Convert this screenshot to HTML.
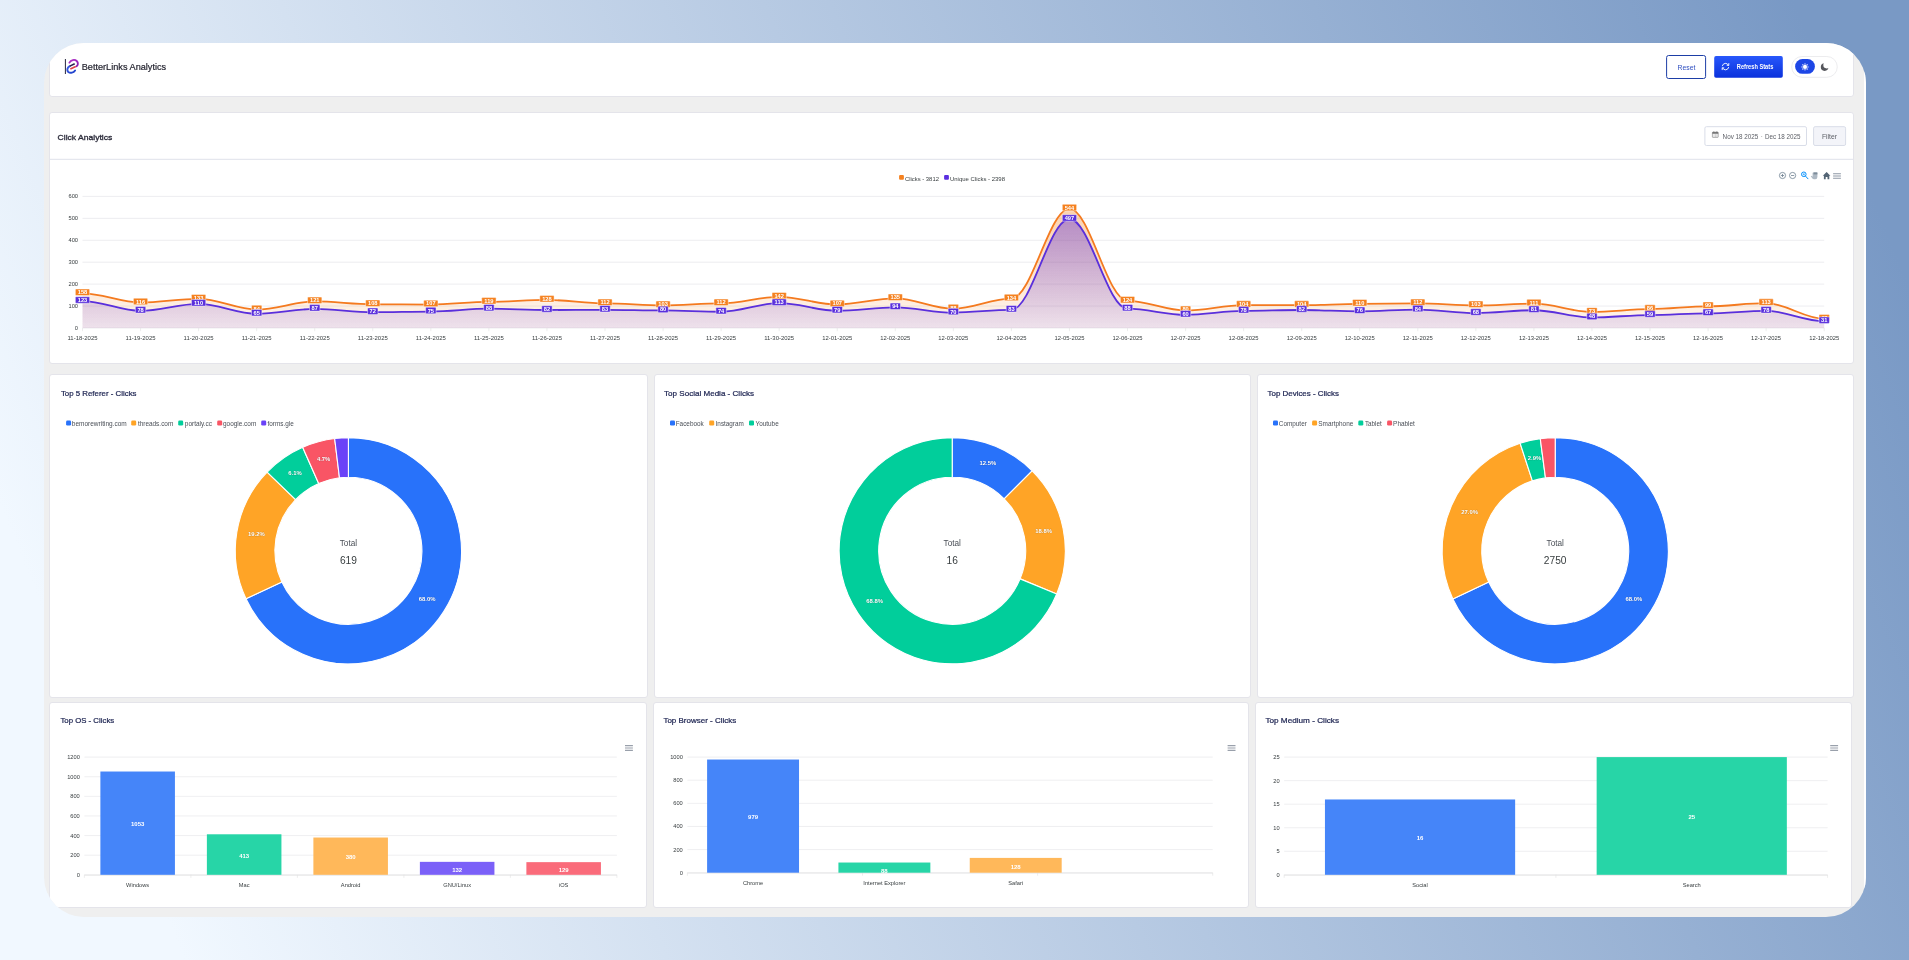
<!DOCTYPE html>
<html><head><meta charset="utf-8"><title>BetterLinks Analytics</title>
<style>
html,body{margin:0;padding:0}
body{width:1909px;height:960px;overflow:hidden;position:relative;font-family:"Liberation Sans", sans-serif;background:#b5c8e2;}
#bg{position:absolute;left:0;top:0;width:1909px;height:960px;background:linear-gradient(68deg,#f1f8ff 0%,#f1f8ff 8%,#7999c5 95%,#7999c5 100%);}
#frame{position:absolute;left:44px;top:43px;width:1822px;height:874px;border-radius:40px;overflow:hidden;background:#efefef;}
#in{position:absolute;left:-44px;top:-43px;width:1909px;height:960px;}
.card{position:absolute;background:#fff;border:1px solid #e4e4ea;border-radius:3px;box-sizing:border-box;}
svg{position:absolute;left:0;top:0;}
svg text{font-family:"Liberation Sans", sans-serif;}
#edge{position:absolute;left:1864px;top:0;width:2px;height:960px;background:#fff;}
</style></head><body>
<div id="bg"></div>
<div id="frame"><div id="in">
<div class="card" style="left:49px;top:42px;width:1805.0px;height:55.0px"></div>
<div class="card" style="left:49px;top:112px;width:1805.0px;height:252.0px"></div>
<div class="card" style="left:49px;top:374px;width:599.0px;height:324.0px"></div>
<div class="card" style="left:654px;top:374px;width:597.0px;height:324.0px"></div>
<div class="card" style="left:1257px;top:374px;width:597.0px;height:324.0px"></div>
<div class="card" style="left:49px;top:702px;width:598.0px;height:206.0px"></div>
<div class="card" style="left:653px;top:702px;width:596.0px;height:206.0px"></div>
<div class="card" style="left:1255px;top:702px;width:597.0px;height:206.0px"></div>
<div id="edge"></div>
<svg width="1909" height="960" viewBox="0 0 1909 960"><g opacity="0.999">
<line x1="65.4" y1="59" x2="65.4" y2="74" stroke="#25253d" stroke-width="1"/>
<defs><linearGradient id="lgp" x1="0" y1="0" x2="1" y2="1"><stop offset="0" stop-color="#b030c8"/><stop offset="1" stop-color="#8a1fb0"/></linearGradient><linearGradient id="lgb" x1="0" y1="0" x2="1" y2="1"><stop offset="0" stop-color="#3a5be8"/><stop offset="1" stop-color="#1c3fc8"/></linearGradient></defs>
<path d="M69.4 62.6 C70.9 59.9 74.6 59.0 76.7 61.0 C78.6 63.0 78.0 65.2 76.5 66.3" fill="none" stroke="url(#lgp)" stroke-width="1.85" stroke-linecap="round"/>
<path d="M69.7 66.2 C67.1 67.6 66.6 70.4 68.3 72.0 C70.3 73.6 73.5 72.7 75.1 70.5" fill="none" stroke="url(#lgb)" stroke-width="1.95" stroke-linecap="round"/>
<line x1="70.3" y1="65.9" x2="74.2" y2="64" stroke="#2a2150" stroke-width="1.6" stroke-linecap="round"/>
<line x1="70.9" y1="68.7" x2="75.2" y2="66.8" stroke="#e2404a" stroke-width="1.7" stroke-linecap="round"/>
<text x="81.70" y="69.80" font-size="9.3" text-anchor="start" font-weight="normal" fill="#1f1f2b" textLength="84.50" lengthAdjust="spacingAndGlyphs" stroke="#1f1f2b" stroke-width="0.2">BetterLinks Analytics</text>
<rect x="1666.6" y="55.5" width="39" height="23" rx="2" fill="#fff" stroke="#1d3ea6" stroke-width="1"/>
<text x="1677.60" y="69.80" font-size="7.4" text-anchor="start" font-weight="normal" fill="#2f4fc0" textLength="17.90" lengthAdjust="spacingAndGlyphs">Reset</text>
<defs><linearGradient id="gbtn" x1="0" y1="0" x2="0" y2="1"><stop offset="0" stop-color="#2857fb"/><stop offset="1" stop-color="#0a31dc"/></linearGradient></defs>
<rect x="1714.2" y="56.1" width="68.6" height="21.6" rx="1.8" fill="url(#gbtn)"/>
<g fill="none" stroke="#fff" stroke-width="0.9" stroke-linecap="round" stroke-linejoin="round"><path d="M1722.36 65.76 A3.25 3.25 0 0 1 1728.45 65.23"/><path d="M1728.64 67.44 A3.25 3.25 0 0 1 1722.55 67.97"/><path d="M1728.80 63.53 L1728.80 65.33 L1727.15 65.33"/><path d="M1722.20 69.67 L1722.20 67.87 L1723.85 67.87"/></g>
<text x="1736.80" y="68.90" font-size="6.6" text-anchor="start" font-weight="bold" fill="#fff" textLength="36.50" lengthAdjust="spacingAndGlyphs">Refresh Stats</text>
<rect x="1791.7" y="56.5" width="45.6" height="20.8" rx="10.4" fill="#fff" stroke="#ececee" stroke-width="1"/>
<rect x="1795.1" y="59" width="19.8" height="14.8" rx="7.4" fill="#1d46e6"/>
<circle cx="1805.0" cy="66.9" r="2.05" fill="#fff"/>
<path d="M1807.44 66.15 L1809.15 66.90 L1807.44 67.65 Z M1807.26 68.09 L1807.93 69.83 L1806.19 69.16 Z M1805.75 69.34 L1805.00 71.05 L1804.25 69.34 Z M1803.81 69.16 L1802.07 69.83 L1802.74 68.09 Z M1802.56 67.65 L1800.85 66.90 L1802.56 66.15 Z M1802.74 65.71 L1802.07 63.97 L1803.81 64.64 Z M1804.25 64.46 L1805.00 62.75 L1805.75 64.46 Z M1806.19 64.64 L1807.93 63.97 L1807.26 65.71 Z " fill="#fff"/>
<mask id="mm"><rect x="1815" y="60" width="20" height="14" fill="#fff"/><circle cx="1826.60" cy="65.10" r="3.3" fill="#000"/></mask>
<circle cx="1824.60" cy="67.10" r="3.8" fill="#55565c" mask="url(#mm)"/>
<text x="57.60" y="140.00" font-size="8.1" text-anchor="start" font-weight="normal" fill="#2b2b3a" textLength="54.70" lengthAdjust="spacingAndGlyphs" stroke="#2b2b3a" stroke-width="0.32">Click Analytics</text>
<line x1="50" y1="159.3" x2="1853" y2="159.3" stroke="#dfe2ea" stroke-width="1"/>
<rect x="1704.9" y="126.7" width="101.6" height="18.8" rx="1.5" fill="#fff" stroke="#d9dde8" stroke-width="1"/>
<g><rect x="1712.4" y="132.2" width="5.8" height="5.2" rx="0.5" fill="#fff" stroke="#777" stroke-width="0.6"/><rect x="1712.4" y="132.2" width="5.8" height="1.5" fill="#666"/><path d="M1713.8 131.3v1.4M1716.8 131.3v1.4" stroke="#666" stroke-width="0.6"/><path d="M1713.6 134.9h0.9M1715 134.9h0.9M1716.4 134.9h0.9M1713.6 136.2h0.9M1715 136.2h0.9M1716.4 136.2h0.9" stroke="#888" stroke-width="0.6"/></g>
<text x="1722.60" y="138.60" font-size="6.3" text-anchor="start" font-weight="normal" fill="#5c5f66" textLength="35.70" lengthAdjust="spacingAndGlyphs">Nov 18 2025</text>
<text x="1761.70" y="138.60" font-size="6.3" text-anchor="middle" font-weight="normal" fill="#999">·</text>
<text x="1764.90" y="138.60" font-size="6.3" text-anchor="start" font-weight="normal" fill="#5c5f66" textLength="35.50" lengthAdjust="spacingAndGlyphs">Dec 18 2025</text>
<rect x="1813.6" y="126.7" width="32" height="18.8" rx="1.5" fill="#f3f4f9" stroke="#d9dde8" stroke-width="1"/>
<text x="1829.40" y="138.60" font-size="6.6" text-anchor="middle" font-weight="normal" fill="#5c5f66" textLength="15.00" lengthAdjust="spacingAndGlyphs">Filter</text>
<rect x="899.1" y="175.0" width="4.8" height="4.8" rx="1" fill="#f5811f"/>
<text x="905.00" y="180.70" font-size="5.9" text-anchor="start" font-weight="normal" fill="#373d3f" textLength="33.90" lengthAdjust="spacingAndGlyphs">Clicks - 3812</text>
<rect x="944.1" y="175.0" width="4.8" height="4.8" rx="1" fill="#5b2fe0"/>
<text x="950.00" y="180.70" font-size="5.9" text-anchor="start" font-weight="normal" fill="#373d3f" textLength="55.00" lengthAdjust="spacingAndGlyphs">Unique Clicks - 2398</text>
<g fill="none" stroke="#6e8192" stroke-width="0.8"><circle cx="1782.5" cy="175.5" r="3.1"/><path d="M1780.9 175.5h3.2M1782.5 173.9v3.2"/><circle cx="1792.6" cy="175.5" r="3.1"/><path d="M1791 175.5h3.2"/></g>
<g fill="none" stroke="#008ffb" stroke-width="1"><circle cx="1803.8" cy="174.3" r="2.3"/><path d="M1805.5 176.1L1808 178.8" stroke-linecap="round"/><path d="M1802.7 174.3h2.2M1803.8 173.2v2.2" stroke-width="0.6"/></g>
<path d="M1813 172.6 h3.6 a0.8 0.8 0 0 1 .8 .8 v3.6 a2.2 2.2 0 0 1 -2.2 2.2 h-1.2 a2 2 0 0 1 -1.6 -.8 l-1.6 -2.2 l.7 -.5 l1.1 1 v-3.6 z" fill="#aeb9c4"/><rect x="1813.6" y="172.4" width="3.8" height="2" fill="#7d8c9a"/>
<path d="M1826.6 172 L1830.4 175.7 H1829.3 V179.2 H1827.5 V176.9 H1825.7 V179.2 H1823.9 V175.7 H1822.8 Z" fill="#546575"/>
<path d="M1833.1 173.7h7.8M1833.1 176h7.8M1833.1 178.2h7.8" stroke="#8e98a5" stroke-width="1.1"/>
<line x1="82.5" y1="328.00" x2="1824.2" y2="328.00" stroke="#e9e9ec" stroke-width="0.8"/>
<text x="78.00" y="330.00" font-size="5.7" text-anchor="end" font-weight="normal" fill="#373d3f">0</text>
<line x1="82.5" y1="306.07" x2="1824.2" y2="306.07" stroke="#e9e9ec" stroke-width="0.8"/>
<text x="78.00" y="308.07" font-size="5.7" text-anchor="end" font-weight="normal" fill="#373d3f">100</text>
<line x1="82.5" y1="284.14" x2="1824.2" y2="284.14" stroke="#e9e9ec" stroke-width="0.8"/>
<text x="78.00" y="286.14" font-size="5.7" text-anchor="end" font-weight="normal" fill="#373d3f">200</text>
<line x1="82.5" y1="262.21" x2="1824.2" y2="262.21" stroke="#e9e9ec" stroke-width="0.8"/>
<text x="78.00" y="264.21" font-size="5.7" text-anchor="end" font-weight="normal" fill="#373d3f">300</text>
<line x1="82.5" y1="240.28" x2="1824.2" y2="240.28" stroke="#e9e9ec" stroke-width="0.8"/>
<text x="78.00" y="242.28" font-size="5.7" text-anchor="end" font-weight="normal" fill="#373d3f">400</text>
<line x1="82.5" y1="218.35" x2="1824.2" y2="218.35" stroke="#e9e9ec" stroke-width="0.8"/>
<text x="78.00" y="220.35" font-size="5.7" text-anchor="end" font-weight="normal" fill="#373d3f">500</text>
<line x1="82.5" y1="196.42" x2="1824.2" y2="196.42" stroke="#e9e9ec" stroke-width="0.8"/>
<text x="78.00" y="198.42" font-size="5.7" text-anchor="end" font-weight="normal" fill="#373d3f">600</text>
<defs><linearGradient id="gor" gradientUnits="userSpaceOnUse" x1="0" y1="208" x2="0" y2="328"><stop offset="0" stop-color="#f5811f" stop-opacity="0.36"/><stop offset="1" stop-color="#f5811f" stop-opacity="0.08"/></linearGradient><linearGradient id="gpu" gradientUnits="userSpaceOnUse" x1="0" y1="219" x2="0" y2="328"><stop offset="0" stop-color="#5a2fdc" stop-opacity="0.43"/><stop offset="1" stop-color="#5a2fdc" stop-opacity="0.10"/></linearGradient></defs>
<path d="M82.50 293.35 C102.82 293.35 120.24 302.56 140.56 302.56 C160.88 302.56 178.29 298.83 198.61 298.83 C218.93 298.83 236.35 309.58 256.67 309.58 C276.99 309.58 294.41 301.46 314.73 301.46 C335.05 301.46 352.46 304.32 372.78 304.32 C393.10 304.32 410.52 304.53 430.84 304.53 C451.16 304.53 468.58 301.90 488.90 301.90 C509.22 301.90 526.63 299.93 546.95 299.93 C567.27 299.93 584.69 303.44 605.01 303.44 C625.33 303.44 642.75 305.41 663.07 305.41 C683.39 305.41 700.80 303.44 721.12 303.44 C741.44 303.44 758.86 296.86 779.18 296.86 C799.50 296.86 816.92 304.53 837.24 304.53 C857.56 304.53 874.97 298.39 895.29 298.39 C915.61 298.39 933.03 308.70 953.35 308.70 C973.67 308.70 991.09 298.61 1011.41 298.61 C1031.73 298.61 1049.14 208.70 1069.46 208.70 C1089.78 208.70 1107.20 300.81 1127.52 300.81 C1147.84 300.81 1165.26 310.46 1185.58 310.46 C1205.90 310.46 1223.31 305.19 1243.63 305.19 C1263.95 305.19 1281.37 305.19 1301.69 305.19 C1322.01 305.19 1339.43 303.88 1359.75 303.88 C1380.07 303.88 1397.48 303.44 1417.80 303.44 C1438.12 303.44 1455.54 305.41 1475.86 305.41 C1496.18 305.41 1513.60 303.66 1533.92 303.66 C1554.24 303.66 1571.65 311.99 1591.97 311.99 C1612.29 311.99 1629.71 309.14 1650.03 309.14 C1670.35 309.14 1687.77 306.29 1708.09 306.29 C1728.41 306.29 1745.82 303.22 1766.14 303.22 C1786.46 303.22 1803.88 318.79 1824.20 318.79 L1824.2 328.0 L82.5 328.0 Z" fill="url(#gor)"/>
<path d="M82.50 301.03 C102.82 301.03 120.24 310.89 140.56 310.89 C160.88 310.89 178.29 303.88 198.61 303.88 C218.93 303.88 236.35 313.75 256.67 313.75 C276.99 313.75 294.41 308.92 314.73 308.92 C335.05 308.92 352.46 312.21 372.78 312.21 C393.10 312.21 410.52 311.55 430.84 311.55 C451.16 311.55 468.58 308.70 488.90 308.70 C509.22 308.70 526.63 310.02 546.95 310.02 C567.27 310.02 584.69 309.80 605.01 309.80 C625.33 309.80 642.75 310.46 663.07 310.46 C683.39 310.46 700.80 311.77 721.12 311.77 C741.44 311.77 758.86 303.22 779.18 303.22 C799.50 303.22 816.92 310.68 837.24 310.68 C857.56 310.68 874.97 307.39 895.29 307.39 C915.61 307.39 933.03 312.65 953.35 312.65 C973.67 312.65 991.09 309.80 1011.41 309.80 C1031.73 309.80 1049.14 219.01 1069.46 219.01 C1089.78 219.01 1107.20 308.70 1127.52 308.70 C1147.84 308.70 1165.26 314.84 1185.58 314.84 C1205.90 314.84 1223.31 310.89 1243.63 310.89 C1263.95 310.89 1281.37 310.02 1301.69 310.02 C1322.01 310.02 1339.43 311.33 1359.75 311.33 C1380.07 311.33 1397.48 309.58 1417.80 309.58 C1438.12 309.58 1455.54 313.09 1475.86 313.09 C1496.18 313.09 1513.60 310.24 1533.92 310.24 C1554.24 310.24 1571.65 317.47 1591.97 317.47 C1612.29 317.47 1629.71 315.06 1650.03 315.06 C1670.35 315.06 1687.77 313.31 1708.09 313.31 C1728.41 313.31 1745.82 310.89 1766.14 310.89 C1786.46 310.89 1803.88 321.20 1824.20 321.20 L1824.2 328.0 L82.5 328.0 Z" fill="url(#gpu)"/>
<path d="M82.50 293.35 C102.82 293.35 120.24 302.56 140.56 302.56 C160.88 302.56 178.29 298.83 198.61 298.83 C218.93 298.83 236.35 309.58 256.67 309.58 C276.99 309.58 294.41 301.46 314.73 301.46 C335.05 301.46 352.46 304.32 372.78 304.32 C393.10 304.32 410.52 304.53 430.84 304.53 C451.16 304.53 468.58 301.90 488.90 301.90 C509.22 301.90 526.63 299.93 546.95 299.93 C567.27 299.93 584.69 303.44 605.01 303.44 C625.33 303.44 642.75 305.41 663.07 305.41 C683.39 305.41 700.80 303.44 721.12 303.44 C741.44 303.44 758.86 296.86 779.18 296.86 C799.50 296.86 816.92 304.53 837.24 304.53 C857.56 304.53 874.97 298.39 895.29 298.39 C915.61 298.39 933.03 308.70 953.35 308.70 C973.67 308.70 991.09 298.61 1011.41 298.61 C1031.73 298.61 1049.14 208.70 1069.46 208.70 C1089.78 208.70 1107.20 300.81 1127.52 300.81 C1147.84 300.81 1165.26 310.46 1185.58 310.46 C1205.90 310.46 1223.31 305.19 1243.63 305.19 C1263.95 305.19 1281.37 305.19 1301.69 305.19 C1322.01 305.19 1339.43 303.88 1359.75 303.88 C1380.07 303.88 1397.48 303.44 1417.80 303.44 C1438.12 303.44 1455.54 305.41 1475.86 305.41 C1496.18 305.41 1513.60 303.66 1533.92 303.66 C1554.24 303.66 1571.65 311.99 1591.97 311.99 C1612.29 311.99 1629.71 309.14 1650.03 309.14 C1670.35 309.14 1687.77 306.29 1708.09 306.29 C1728.41 306.29 1745.82 303.22 1766.14 303.22 C1786.46 303.22 1803.88 318.79 1824.20 318.79" fill="none" stroke="#f47a1f" stroke-width="1.8" stroke-linejoin="round"/>
<path d="M82.50 301.03 C102.82 301.03 120.24 310.89 140.56 310.89 C160.88 310.89 178.29 303.88 198.61 303.88 C218.93 303.88 236.35 313.75 256.67 313.75 C276.99 313.75 294.41 308.92 314.73 308.92 C335.05 308.92 352.46 312.21 372.78 312.21 C393.10 312.21 410.52 311.55 430.84 311.55 C451.16 311.55 468.58 308.70 488.90 308.70 C509.22 308.70 526.63 310.02 546.95 310.02 C567.27 310.02 584.69 309.80 605.01 309.80 C625.33 309.80 642.75 310.46 663.07 310.46 C683.39 310.46 700.80 311.77 721.12 311.77 C741.44 311.77 758.86 303.22 779.18 303.22 C799.50 303.22 816.92 310.68 837.24 310.68 C857.56 310.68 874.97 307.39 895.29 307.39 C915.61 307.39 933.03 312.65 953.35 312.65 C973.67 312.65 991.09 309.80 1011.41 309.80 C1031.73 309.80 1049.14 219.01 1069.46 219.01 C1089.78 219.01 1107.20 308.70 1127.52 308.70 C1147.84 308.70 1165.26 314.84 1185.58 314.84 C1205.90 314.84 1223.31 310.89 1243.63 310.89 C1263.95 310.89 1281.37 310.02 1301.69 310.02 C1322.01 310.02 1339.43 311.33 1359.75 311.33 C1380.07 311.33 1397.48 309.58 1417.80 309.58 C1438.12 309.58 1455.54 313.09 1475.86 313.09 C1496.18 313.09 1513.60 310.24 1533.92 310.24 C1554.24 310.24 1571.65 317.47 1591.97 317.47 C1612.29 317.47 1629.71 315.06 1650.03 315.06 C1670.35 315.06 1687.77 313.31 1708.09 313.31 C1728.41 313.31 1745.82 310.89 1766.14 310.89 C1786.46 310.89 1803.88 321.20 1824.20 321.20" fill="none" stroke="#5a2fdc" stroke-width="1.8" stroke-linejoin="round"/>
<line x1="82.50" y1="328.0" x2="82.50" y2="331.2" stroke="#e0e0e0" stroke-width="0.6"/>
<text x="82.50" y="339.60" font-size="5.7" text-anchor="middle" font-weight="normal" fill="#373d3f" textLength="30.00" lengthAdjust="spacingAndGlyphs">11-18-2025</text>
<line x1="140.56" y1="328.0" x2="140.56" y2="331.2" stroke="#e0e0e0" stroke-width="0.6"/>
<text x="140.56" y="339.60" font-size="5.7" text-anchor="middle" font-weight="normal" fill="#373d3f" textLength="30.00" lengthAdjust="spacingAndGlyphs">11-19-2025</text>
<line x1="198.61" y1="328.0" x2="198.61" y2="331.2" stroke="#e0e0e0" stroke-width="0.6"/>
<text x="198.61" y="339.60" font-size="5.7" text-anchor="middle" font-weight="normal" fill="#373d3f" textLength="30.00" lengthAdjust="spacingAndGlyphs">11-20-2025</text>
<line x1="256.67" y1="328.0" x2="256.67" y2="331.2" stroke="#e0e0e0" stroke-width="0.6"/>
<text x="256.67" y="339.60" font-size="5.7" text-anchor="middle" font-weight="normal" fill="#373d3f" textLength="30.00" lengthAdjust="spacingAndGlyphs">11-21-2025</text>
<line x1="314.73" y1="328.0" x2="314.73" y2="331.2" stroke="#e0e0e0" stroke-width="0.6"/>
<text x="314.73" y="339.60" font-size="5.7" text-anchor="middle" font-weight="normal" fill="#373d3f" textLength="30.00" lengthAdjust="spacingAndGlyphs">11-22-2025</text>
<line x1="372.78" y1="328.0" x2="372.78" y2="331.2" stroke="#e0e0e0" stroke-width="0.6"/>
<text x="372.78" y="339.60" font-size="5.7" text-anchor="middle" font-weight="normal" fill="#373d3f" textLength="30.00" lengthAdjust="spacingAndGlyphs">11-23-2025</text>
<line x1="430.84" y1="328.0" x2="430.84" y2="331.2" stroke="#e0e0e0" stroke-width="0.6"/>
<text x="430.84" y="339.60" font-size="5.7" text-anchor="middle" font-weight="normal" fill="#373d3f" textLength="30.00" lengthAdjust="spacingAndGlyphs">11-24-2025</text>
<line x1="488.90" y1="328.0" x2="488.90" y2="331.2" stroke="#e0e0e0" stroke-width="0.6"/>
<text x="488.90" y="339.60" font-size="5.7" text-anchor="middle" font-weight="normal" fill="#373d3f" textLength="30.00" lengthAdjust="spacingAndGlyphs">11-25-2025</text>
<line x1="546.95" y1="328.0" x2="546.95" y2="331.2" stroke="#e0e0e0" stroke-width="0.6"/>
<text x="546.95" y="339.60" font-size="5.7" text-anchor="middle" font-weight="normal" fill="#373d3f" textLength="30.00" lengthAdjust="spacingAndGlyphs">11-26-2025</text>
<line x1="605.01" y1="328.0" x2="605.01" y2="331.2" stroke="#e0e0e0" stroke-width="0.6"/>
<text x="605.01" y="339.60" font-size="5.7" text-anchor="middle" font-weight="normal" fill="#373d3f" textLength="30.00" lengthAdjust="spacingAndGlyphs">11-27-2025</text>
<line x1="663.07" y1="328.0" x2="663.07" y2="331.2" stroke="#e0e0e0" stroke-width="0.6"/>
<text x="663.07" y="339.60" font-size="5.7" text-anchor="middle" font-weight="normal" fill="#373d3f" textLength="30.00" lengthAdjust="spacingAndGlyphs">11-28-2025</text>
<line x1="721.12" y1="328.0" x2="721.12" y2="331.2" stroke="#e0e0e0" stroke-width="0.6"/>
<text x="721.12" y="339.60" font-size="5.7" text-anchor="middle" font-weight="normal" fill="#373d3f" textLength="30.00" lengthAdjust="spacingAndGlyphs">11-29-2025</text>
<line x1="779.18" y1="328.0" x2="779.18" y2="331.2" stroke="#e0e0e0" stroke-width="0.6"/>
<text x="779.18" y="339.60" font-size="5.7" text-anchor="middle" font-weight="normal" fill="#373d3f" textLength="30.00" lengthAdjust="spacingAndGlyphs">11-30-2025</text>
<line x1="837.24" y1="328.0" x2="837.24" y2="331.2" stroke="#e0e0e0" stroke-width="0.6"/>
<text x="837.24" y="339.60" font-size="5.7" text-anchor="middle" font-weight="normal" fill="#373d3f" textLength="30.00" lengthAdjust="spacingAndGlyphs">12-01-2025</text>
<line x1="895.29" y1="328.0" x2="895.29" y2="331.2" stroke="#e0e0e0" stroke-width="0.6"/>
<text x="895.29" y="339.60" font-size="5.7" text-anchor="middle" font-weight="normal" fill="#373d3f" textLength="30.00" lengthAdjust="spacingAndGlyphs">12-02-2025</text>
<line x1="953.35" y1="328.0" x2="953.35" y2="331.2" stroke="#e0e0e0" stroke-width="0.6"/>
<text x="953.35" y="339.60" font-size="5.7" text-anchor="middle" font-weight="normal" fill="#373d3f" textLength="30.00" lengthAdjust="spacingAndGlyphs">12-03-2025</text>
<line x1="1011.41" y1="328.0" x2="1011.41" y2="331.2" stroke="#e0e0e0" stroke-width="0.6"/>
<text x="1011.41" y="339.60" font-size="5.7" text-anchor="middle" font-weight="normal" fill="#373d3f" textLength="30.00" lengthAdjust="spacingAndGlyphs">12-04-2025</text>
<line x1="1069.46" y1="328.0" x2="1069.46" y2="331.2" stroke="#e0e0e0" stroke-width="0.6"/>
<text x="1069.46" y="339.60" font-size="5.7" text-anchor="middle" font-weight="normal" fill="#373d3f" textLength="30.00" lengthAdjust="spacingAndGlyphs">12-05-2025</text>
<line x1="1127.52" y1="328.0" x2="1127.52" y2="331.2" stroke="#e0e0e0" stroke-width="0.6"/>
<text x="1127.52" y="339.60" font-size="5.7" text-anchor="middle" font-weight="normal" fill="#373d3f" textLength="30.00" lengthAdjust="spacingAndGlyphs">12-06-2025</text>
<line x1="1185.58" y1="328.0" x2="1185.58" y2="331.2" stroke="#e0e0e0" stroke-width="0.6"/>
<text x="1185.58" y="339.60" font-size="5.7" text-anchor="middle" font-weight="normal" fill="#373d3f" textLength="30.00" lengthAdjust="spacingAndGlyphs">12-07-2025</text>
<line x1="1243.63" y1="328.0" x2="1243.63" y2="331.2" stroke="#e0e0e0" stroke-width="0.6"/>
<text x="1243.63" y="339.60" font-size="5.7" text-anchor="middle" font-weight="normal" fill="#373d3f" textLength="30.00" lengthAdjust="spacingAndGlyphs">12-08-2025</text>
<line x1="1301.69" y1="328.0" x2="1301.69" y2="331.2" stroke="#e0e0e0" stroke-width="0.6"/>
<text x="1301.69" y="339.60" font-size="5.7" text-anchor="middle" font-weight="normal" fill="#373d3f" textLength="30.00" lengthAdjust="spacingAndGlyphs">12-09-2025</text>
<line x1="1359.75" y1="328.0" x2="1359.75" y2="331.2" stroke="#e0e0e0" stroke-width="0.6"/>
<text x="1359.75" y="339.60" font-size="5.7" text-anchor="middle" font-weight="normal" fill="#373d3f" textLength="30.00" lengthAdjust="spacingAndGlyphs">12-10-2025</text>
<line x1="1417.80" y1="328.0" x2="1417.80" y2="331.2" stroke="#e0e0e0" stroke-width="0.6"/>
<text x="1417.80" y="339.60" font-size="5.7" text-anchor="middle" font-weight="normal" fill="#373d3f" textLength="30.00" lengthAdjust="spacingAndGlyphs">12-11-2025</text>
<line x1="1475.86" y1="328.0" x2="1475.86" y2="331.2" stroke="#e0e0e0" stroke-width="0.6"/>
<text x="1475.86" y="339.60" font-size="5.7" text-anchor="middle" font-weight="normal" fill="#373d3f" textLength="30.00" lengthAdjust="spacingAndGlyphs">12-12-2025</text>
<line x1="1533.92" y1="328.0" x2="1533.92" y2="331.2" stroke="#e0e0e0" stroke-width="0.6"/>
<text x="1533.92" y="339.60" font-size="5.7" text-anchor="middle" font-weight="normal" fill="#373d3f" textLength="30.00" lengthAdjust="spacingAndGlyphs">12-13-2025</text>
<line x1="1591.97" y1="328.0" x2="1591.97" y2="331.2" stroke="#e0e0e0" stroke-width="0.6"/>
<text x="1591.97" y="339.60" font-size="5.7" text-anchor="middle" font-weight="normal" fill="#373d3f" textLength="30.00" lengthAdjust="spacingAndGlyphs">12-14-2025</text>
<line x1="1650.03" y1="328.0" x2="1650.03" y2="331.2" stroke="#e0e0e0" stroke-width="0.6"/>
<text x="1650.03" y="339.60" font-size="5.7" text-anchor="middle" font-weight="normal" fill="#373d3f" textLength="30.00" lengthAdjust="spacingAndGlyphs">12-15-2025</text>
<line x1="1708.09" y1="328.0" x2="1708.09" y2="331.2" stroke="#e0e0e0" stroke-width="0.6"/>
<text x="1708.09" y="339.60" font-size="5.7" text-anchor="middle" font-weight="normal" fill="#373d3f" textLength="30.00" lengthAdjust="spacingAndGlyphs">12-16-2025</text>
<line x1="1766.14" y1="328.0" x2="1766.14" y2="331.2" stroke="#e0e0e0" stroke-width="0.6"/>
<text x="1766.14" y="339.60" font-size="5.7" text-anchor="middle" font-weight="normal" fill="#373d3f" textLength="30.00" lengthAdjust="spacingAndGlyphs">12-17-2025</text>
<line x1="1824.20" y1="328.0" x2="1824.20" y2="331.2" stroke="#e0e0e0" stroke-width="0.6"/>
<text x="1824.20" y="339.60" font-size="5.7" text-anchor="middle" font-weight="normal" fill="#373d3f" textLength="30.00" lengthAdjust="spacingAndGlyphs">12-18-2025</text>
<rect x="75.35" y="289.00" width="14.30" height="6.5" rx="0.8" fill="#f5811f" stroke="#fff" stroke-width="0.45"/>
<text x="82.50" y="294.30" font-size="5.7" text-anchor="middle" font-weight="bold" fill="#fff">158</text>
<rect x="75.35" y="296.73" width="14.30" height="6.5" rx="0.8" fill="#5a2fdc" stroke="#fff" stroke-width="0.45"/>
<text x="82.50" y="302.03" font-size="5.7" text-anchor="middle" font-weight="bold" fill="#fff">123</text>
<rect x="133.41" y="298.21" width="14.30" height="6.5" rx="0.8" fill="#f5811f" stroke="#fff" stroke-width="0.45"/>
<text x="140.56" y="303.51" font-size="5.7" text-anchor="middle" font-weight="bold" fill="#fff">116</text>
<rect x="135.36" y="306.59" width="10.40" height="6.5" rx="0.8" fill="#5a2fdc" stroke="#fff" stroke-width="0.45"/>
<text x="140.56" y="311.89" font-size="5.7" text-anchor="middle" font-weight="bold" fill="#fff">78</text>
<rect x="191.46" y="294.48" width="14.30" height="6.5" rx="0.8" fill="#f5811f" stroke="#fff" stroke-width="0.45"/>
<text x="198.61" y="299.78" font-size="5.7" text-anchor="middle" font-weight="bold" fill="#fff">133</text>
<rect x="191.46" y="299.58" width="14.30" height="6.5" rx="0.8" fill="#5a2fdc" stroke="#fff" stroke-width="0.45"/>
<text x="198.61" y="304.88" font-size="5.7" text-anchor="middle" font-weight="bold" fill="#fff">110</text>
<rect x="251.47" y="305.23" width="10.40" height="6.5" rx="0.8" fill="#f5811f" stroke="#fff" stroke-width="0.45"/>
<text x="256.67" y="310.53" font-size="5.7" text-anchor="middle" font-weight="bold" fill="#fff">84</text>
<rect x="251.47" y="309.45" width="10.40" height="6.5" rx="0.8" fill="#5a2fdc" stroke="#fff" stroke-width="0.45"/>
<text x="256.67" y="314.75" font-size="5.7" text-anchor="middle" font-weight="bold" fill="#fff">65</text>
<rect x="307.58" y="297.11" width="14.30" height="6.5" rx="0.8" fill="#f5811f" stroke="#fff" stroke-width="0.45"/>
<text x="314.73" y="302.41" font-size="5.7" text-anchor="middle" font-weight="bold" fill="#fff">121</text>
<rect x="309.53" y="304.62" width="10.40" height="6.5" rx="0.8" fill="#5a2fdc" stroke="#fff" stroke-width="0.45"/>
<text x="314.73" y="309.92" font-size="5.7" text-anchor="middle" font-weight="bold" fill="#fff">87</text>
<rect x="365.63" y="299.97" width="14.30" height="6.5" rx="0.8" fill="#f5811f" stroke="#fff" stroke-width="0.45"/>
<text x="372.78" y="305.27" font-size="5.7" text-anchor="middle" font-weight="bold" fill="#fff">108</text>
<rect x="367.58" y="307.91" width="10.40" height="6.5" rx="0.8" fill="#5a2fdc" stroke="#fff" stroke-width="0.45"/>
<text x="372.78" y="313.21" font-size="5.7" text-anchor="middle" font-weight="bold" fill="#fff">72</text>
<rect x="423.69" y="300.18" width="14.30" height="6.5" rx="0.8" fill="#f5811f" stroke="#fff" stroke-width="0.45"/>
<text x="430.84" y="305.48" font-size="5.7" text-anchor="middle" font-weight="bold" fill="#fff">107</text>
<rect x="425.64" y="307.25" width="10.40" height="6.5" rx="0.8" fill="#5a2fdc" stroke="#fff" stroke-width="0.45"/>
<text x="430.84" y="312.55" font-size="5.7" text-anchor="middle" font-weight="bold" fill="#fff">75</text>
<rect x="481.75" y="297.55" width="14.30" height="6.5" rx="0.8" fill="#f5811f" stroke="#fff" stroke-width="0.45"/>
<text x="488.90" y="302.85" font-size="5.7" text-anchor="middle" font-weight="bold" fill="#fff">119</text>
<rect x="483.70" y="304.40" width="10.40" height="6.5" rx="0.8" fill="#5a2fdc" stroke="#fff" stroke-width="0.45"/>
<text x="488.90" y="309.70" font-size="5.7" text-anchor="middle" font-weight="bold" fill="#fff">88</text>
<rect x="539.80" y="295.58" width="14.30" height="6.5" rx="0.8" fill="#f5811f" stroke="#fff" stroke-width="0.45"/>
<text x="546.95" y="300.88" font-size="5.7" text-anchor="middle" font-weight="bold" fill="#fff">128</text>
<rect x="541.75" y="305.72" width="10.40" height="6.5" rx="0.8" fill="#5a2fdc" stroke="#fff" stroke-width="0.45"/>
<text x="546.95" y="311.02" font-size="5.7" text-anchor="middle" font-weight="bold" fill="#fff">82</text>
<rect x="597.86" y="299.09" width="14.30" height="6.5" rx="0.8" fill="#f5811f" stroke="#fff" stroke-width="0.45"/>
<text x="605.01" y="304.39" font-size="5.7" text-anchor="middle" font-weight="bold" fill="#fff">112</text>
<rect x="599.81" y="305.50" width="10.40" height="6.5" rx="0.8" fill="#5a2fdc" stroke="#fff" stroke-width="0.45"/>
<text x="605.01" y="310.80" font-size="5.7" text-anchor="middle" font-weight="bold" fill="#fff">83</text>
<rect x="655.92" y="301.06" width="14.30" height="6.5" rx="0.8" fill="#f5811f" stroke="#fff" stroke-width="0.45"/>
<text x="663.07" y="306.36" font-size="5.7" text-anchor="middle" font-weight="bold" fill="#fff">103</text>
<rect x="657.87" y="306.16" width="10.40" height="6.5" rx="0.8" fill="#5a2fdc" stroke="#fff" stroke-width="0.45"/>
<text x="663.07" y="311.46" font-size="5.7" text-anchor="middle" font-weight="bold" fill="#fff">80</text>
<rect x="713.97" y="299.09" width="14.30" height="6.5" rx="0.8" fill="#f5811f" stroke="#fff" stroke-width="0.45"/>
<text x="721.12" y="304.39" font-size="5.7" text-anchor="middle" font-weight="bold" fill="#fff">112</text>
<rect x="715.92" y="307.47" width="10.40" height="6.5" rx="0.8" fill="#5a2fdc" stroke="#fff" stroke-width="0.45"/>
<text x="721.12" y="312.77" font-size="5.7" text-anchor="middle" font-weight="bold" fill="#fff">74</text>
<rect x="772.03" y="292.51" width="14.30" height="6.5" rx="0.8" fill="#f5811f" stroke="#fff" stroke-width="0.45"/>
<text x="779.18" y="297.81" font-size="5.7" text-anchor="middle" font-weight="bold" fill="#fff">142</text>
<rect x="772.03" y="298.92" width="14.30" height="6.5" rx="0.8" fill="#5a2fdc" stroke="#fff" stroke-width="0.45"/>
<text x="779.18" y="304.22" font-size="5.7" text-anchor="middle" font-weight="bold" fill="#fff">113</text>
<rect x="830.09" y="300.18" width="14.30" height="6.5" rx="0.8" fill="#f5811f" stroke="#fff" stroke-width="0.45"/>
<text x="837.24" y="305.48" font-size="5.7" text-anchor="middle" font-weight="bold" fill="#fff">107</text>
<rect x="832.04" y="306.38" width="10.40" height="6.5" rx="0.8" fill="#5a2fdc" stroke="#fff" stroke-width="0.45"/>
<text x="837.24" y="311.68" font-size="5.7" text-anchor="middle" font-weight="bold" fill="#fff">79</text>
<rect x="888.14" y="294.04" width="14.30" height="6.5" rx="0.8" fill="#f5811f" stroke="#fff" stroke-width="0.45"/>
<text x="895.29" y="299.34" font-size="5.7" text-anchor="middle" font-weight="bold" fill="#fff">135</text>
<rect x="890.09" y="303.09" width="10.40" height="6.5" rx="0.8" fill="#5a2fdc" stroke="#fff" stroke-width="0.45"/>
<text x="895.29" y="308.39" font-size="5.7" text-anchor="middle" font-weight="bold" fill="#fff">94</text>
<rect x="948.15" y="304.35" width="10.40" height="6.5" rx="0.8" fill="#f5811f" stroke="#fff" stroke-width="0.45"/>
<text x="953.35" y="309.65" font-size="5.7" text-anchor="middle" font-weight="bold" fill="#fff">88</text>
<rect x="948.15" y="308.35" width="10.40" height="6.5" rx="0.8" fill="#5a2fdc" stroke="#fff" stroke-width="0.45"/>
<text x="953.35" y="313.65" font-size="5.7" text-anchor="middle" font-weight="bold" fill="#fff">70</text>
<rect x="1004.26" y="294.26" width="14.30" height="6.5" rx="0.8" fill="#f5811f" stroke="#fff" stroke-width="0.45"/>
<text x="1011.41" y="299.56" font-size="5.7" text-anchor="middle" font-weight="bold" fill="#fff">134</text>
<rect x="1006.21" y="305.50" width="10.40" height="6.5" rx="0.8" fill="#5a2fdc" stroke="#fff" stroke-width="0.45"/>
<text x="1011.41" y="310.80" font-size="5.7" text-anchor="middle" font-weight="bold" fill="#fff">83</text>
<rect x="1062.31" y="204.35" width="14.30" height="6.5" rx="0.8" fill="#f5811f" stroke="#fff" stroke-width="0.45"/>
<text x="1069.46" y="209.65" font-size="5.7" text-anchor="middle" font-weight="bold" fill="#fff">544</text>
<rect x="1062.31" y="214.71" width="14.30" height="6.5" rx="0.8" fill="#5a2fdc" stroke="#fff" stroke-width="0.45"/>
<text x="1069.46" y="220.01" font-size="5.7" text-anchor="middle" font-weight="bold" fill="#fff">497</text>
<rect x="1120.37" y="296.46" width="14.30" height="6.5" rx="0.8" fill="#f5811f" stroke="#fff" stroke-width="0.45"/>
<text x="1127.52" y="301.76" font-size="5.7" text-anchor="middle" font-weight="bold" fill="#fff">124</text>
<rect x="1122.32" y="304.40" width="10.40" height="6.5" rx="0.8" fill="#5a2fdc" stroke="#fff" stroke-width="0.45"/>
<text x="1127.52" y="309.70" font-size="5.7" text-anchor="middle" font-weight="bold" fill="#fff">88</text>
<rect x="1180.38" y="306.11" width="10.40" height="6.5" rx="0.8" fill="#f5811f" stroke="#fff" stroke-width="0.45"/>
<text x="1185.58" y="311.41" font-size="5.7" text-anchor="middle" font-weight="bold" fill="#fff">80</text>
<rect x="1180.38" y="310.54" width="10.40" height="6.5" rx="0.8" fill="#5a2fdc" stroke="#fff" stroke-width="0.45"/>
<text x="1185.58" y="315.84" font-size="5.7" text-anchor="middle" font-weight="bold" fill="#fff">60</text>
<rect x="1236.48" y="300.84" width="14.30" height="6.5" rx="0.8" fill="#f5811f" stroke="#fff" stroke-width="0.45"/>
<text x="1243.63" y="306.14" font-size="5.7" text-anchor="middle" font-weight="bold" fill="#fff">104</text>
<rect x="1238.43" y="306.59" width="10.40" height="6.5" rx="0.8" fill="#5a2fdc" stroke="#fff" stroke-width="0.45"/>
<text x="1243.63" y="311.89" font-size="5.7" text-anchor="middle" font-weight="bold" fill="#fff">78</text>
<rect x="1294.54" y="300.84" width="14.30" height="6.5" rx="0.8" fill="#f5811f" stroke="#fff" stroke-width="0.45"/>
<text x="1301.69" y="306.14" font-size="5.7" text-anchor="middle" font-weight="bold" fill="#fff">104</text>
<rect x="1296.49" y="305.72" width="10.40" height="6.5" rx="0.8" fill="#5a2fdc" stroke="#fff" stroke-width="0.45"/>
<text x="1301.69" y="311.02" font-size="5.7" text-anchor="middle" font-weight="bold" fill="#fff">82</text>
<rect x="1352.60" y="299.53" width="14.30" height="6.5" rx="0.8" fill="#f5811f" stroke="#fff" stroke-width="0.45"/>
<text x="1359.75" y="304.83" font-size="5.7" text-anchor="middle" font-weight="bold" fill="#fff">110</text>
<rect x="1354.55" y="307.03" width="10.40" height="6.5" rx="0.8" fill="#5a2fdc" stroke="#fff" stroke-width="0.45"/>
<text x="1359.75" y="312.33" font-size="5.7" text-anchor="middle" font-weight="bold" fill="#fff">76</text>
<rect x="1410.65" y="299.09" width="14.30" height="6.5" rx="0.8" fill="#f5811f" stroke="#fff" stroke-width="0.45"/>
<text x="1417.80" y="304.39" font-size="5.7" text-anchor="middle" font-weight="bold" fill="#fff">112</text>
<rect x="1412.60" y="305.28" width="10.40" height="6.5" rx="0.8" fill="#5a2fdc" stroke="#fff" stroke-width="0.45"/>
<text x="1417.80" y="310.58" font-size="5.7" text-anchor="middle" font-weight="bold" fill="#fff">84</text>
<rect x="1468.71" y="301.06" width="14.30" height="6.5" rx="0.8" fill="#f5811f" stroke="#fff" stroke-width="0.45"/>
<text x="1475.86" y="306.36" font-size="5.7" text-anchor="middle" font-weight="bold" fill="#fff">103</text>
<rect x="1470.66" y="308.79" width="10.40" height="6.5" rx="0.8" fill="#5a2fdc" stroke="#fff" stroke-width="0.45"/>
<text x="1475.86" y="314.09" font-size="5.7" text-anchor="middle" font-weight="bold" fill="#fff">68</text>
<rect x="1526.77" y="299.31" width="14.30" height="6.5" rx="0.8" fill="#f5811f" stroke="#fff" stroke-width="0.45"/>
<text x="1533.92" y="304.61" font-size="5.7" text-anchor="middle" font-weight="bold" fill="#fff">111</text>
<rect x="1528.72" y="305.94" width="10.40" height="6.5" rx="0.8" fill="#5a2fdc" stroke="#fff" stroke-width="0.45"/>
<text x="1533.92" y="311.24" font-size="5.7" text-anchor="middle" font-weight="bold" fill="#fff">81</text>
<rect x="1586.77" y="307.64" width="10.40" height="6.5" rx="0.8" fill="#f5811f" stroke="#fff" stroke-width="0.45"/>
<text x="1591.97" y="312.94" font-size="5.7" text-anchor="middle" font-weight="bold" fill="#fff">73</text>
<rect x="1586.77" y="313.17" width="10.40" height="6.5" rx="0.8" fill="#5a2fdc" stroke="#fff" stroke-width="0.45"/>
<text x="1591.97" y="318.47" font-size="5.7" text-anchor="middle" font-weight="bold" fill="#fff">48</text>
<rect x="1644.83" y="304.79" width="10.40" height="6.5" rx="0.8" fill="#f5811f" stroke="#fff" stroke-width="0.45"/>
<text x="1650.03" y="310.09" font-size="5.7" text-anchor="middle" font-weight="bold" fill="#fff">86</text>
<rect x="1644.83" y="310.76" width="10.40" height="6.5" rx="0.8" fill="#5a2fdc" stroke="#fff" stroke-width="0.45"/>
<text x="1650.03" y="316.06" font-size="5.7" text-anchor="middle" font-weight="bold" fill="#fff">59</text>
<rect x="1702.89" y="301.94" width="10.40" height="6.5" rx="0.8" fill="#f5811f" stroke="#fff" stroke-width="0.45"/>
<text x="1708.09" y="307.24" font-size="5.7" text-anchor="middle" font-weight="bold" fill="#fff">99</text>
<rect x="1702.89" y="309.01" width="10.40" height="6.5" rx="0.8" fill="#5a2fdc" stroke="#fff" stroke-width="0.45"/>
<text x="1708.09" y="314.31" font-size="5.7" text-anchor="middle" font-weight="bold" fill="#fff">67</text>
<rect x="1758.99" y="298.87" width="14.30" height="6.5" rx="0.8" fill="#f5811f" stroke="#fff" stroke-width="0.45"/>
<text x="1766.14" y="304.17" font-size="5.7" text-anchor="middle" font-weight="bold" fill="#fff">113</text>
<rect x="1760.94" y="306.59" width="10.40" height="6.5" rx="0.8" fill="#5a2fdc" stroke="#fff" stroke-width="0.45"/>
<text x="1766.14" y="311.89" font-size="5.7" text-anchor="middle" font-weight="bold" fill="#fff">78</text>
<rect x="1819.00" y="314.44" width="10.40" height="6.5" rx="0.8" fill="#f5811f" stroke="#fff" stroke-width="0.45"/>
<text x="1824.20" y="319.74" font-size="5.7" text-anchor="middle" font-weight="bold" fill="#fff">42</text>
<rect x="1819.00" y="316.90" width="10.40" height="6.5" rx="0.8" fill="#5a2fdc" stroke="#fff" stroke-width="0.45"/>
<text x="1824.20" y="322.20" font-size="5.7" text-anchor="middle" font-weight="bold" fill="#fff">31</text>
<text x="60.90" y="395.70" font-size="7.9" text-anchor="start" font-weight="normal" fill="#1b2250" textLength="75.60" lengthAdjust="spacingAndGlyphs" stroke="#1b2250" stroke-width="0.22">Top 5 Referer - Clicks</text>
<path d="M348.40 437.65 A113.1 113.1 0 1 1 246.02 598.82 L281.87 581.99 A73.5 73.5 0 1 0 348.40 477.25 Z" fill="#2872fa" stroke="#fff" stroke-width="1.1" stroke-linejoin="round"/>
<text x="427.07" y="601.02" font-size="5.9" text-anchor="middle" font-weight="bold" fill="#fff" stroke="#000" stroke-opacity="0.22" stroke-width="0.5" paint-order="stroke">68.0%</text>
<path d="M246.02 598.82 A113.1 113.1 0 0 1 267.12 472.11 L295.58 499.64 A73.5 73.5 0 0 0 281.87 581.99 Z" fill="#ffa426" stroke="#fff" stroke-width="1.1" stroke-linejoin="round"/>
<text x="256.46" y="535.75" font-size="5.9" text-anchor="middle" font-weight="bold" fill="#fff" stroke="#000" stroke-opacity="0.22" stroke-width="0.5" paint-order="stroke">19.2%</text>
<path d="M267.12 472.11 A113.1 113.1 0 0 1 302.68 447.30 L318.69 483.52 A73.5 73.5 0 0 0 295.58 499.64 Z" fill="#00ce9b" stroke="#fff" stroke-width="1.1" stroke-linejoin="round"/>
<text x="295.08" y="474.61" font-size="5.9" text-anchor="middle" font-weight="bold" fill="#fff" stroke="#000" stroke-opacity="0.22" stroke-width="0.5" paint-order="stroke">6.1%</text>
<path d="M302.68 447.30 A113.1 113.1 0 0 1 334.66 438.49 L339.47 477.79 A73.5 73.5 0 0 0 318.69 483.52 Z" fill="#f95565" stroke="#fff" stroke-width="1.1" stroke-linejoin="round"/>
<text x="323.63" y="461.20" font-size="5.9" text-anchor="middle" font-weight="bold" fill="#fff" stroke="#000" stroke-opacity="0.22" stroke-width="0.5" paint-order="stroke">4.7%</text>
<path d="M334.66 438.49 A113.1 113.1 0 0 1 348.40 437.65 L348.40 477.25 A73.5 73.5 0 0 0 339.47 477.79 Z" fill="#6a42f8" stroke="#fff" stroke-width="1.1" stroke-linejoin="round"/>
<text x="348.40" y="546.00" font-size="8.2" text-anchor="middle" font-weight="normal" fill="#4a4f57">Total</text>
<text x="348.40" y="564.40" font-size="10.2" text-anchor="middle" font-weight="normal" fill="#373d3f">619</text>
<rect x="66.10" y="420.6" width="5" height="5" rx="1.3" fill="#2872fa"/>
<text x="71.80" y="425.60" font-size="6.45" text-anchor="start" font-weight="normal" fill="#4a4f57" textLength="55.00" lengthAdjust="spacingAndGlyphs">bemorewriting.com</text>
<rect x="131.20" y="420.6" width="5" height="5" rx="1.3" fill="#ffa426"/>
<text x="137.90" y="425.60" font-size="6.45" text-anchor="start" font-weight="normal" fill="#4a4f57" textLength="35.40" lengthAdjust="spacingAndGlyphs">threads.com</text>
<rect x="178.20" y="420.6" width="5" height="5" rx="1.3" fill="#00ce9b"/>
<text x="184.80" y="425.60" font-size="6.45" text-anchor="start" font-weight="normal" fill="#4a4f57" textLength="27.30" lengthAdjust="spacingAndGlyphs">portaly.cc</text>
<rect x="217.20" y="420.6" width="5" height="5" rx="1.3" fill="#f95565"/>
<text x="223.00" y="425.60" font-size="6.45" text-anchor="start" font-weight="normal" fill="#4a4f57" textLength="33.30" lengthAdjust="spacingAndGlyphs">google.com</text>
<rect x="261.20" y="420.6" width="5" height="5" rx="1.3" fill="#6a42f8"/>
<text x="267.50" y="425.60" font-size="6.45" text-anchor="start" font-weight="normal" fill="#4a4f57" textLength="26.30" lengthAdjust="spacingAndGlyphs">forms.gle</text>
<text x="664.10" y="395.70" font-size="7.9" text-anchor="start" font-weight="normal" fill="#1b2250" textLength="89.90" lengthAdjust="spacingAndGlyphs" stroke="#1b2250" stroke-width="0.22">Top Social Media - Clicks</text>
<path d="M952.20 437.65 A113.1 113.1 0 0 1 1032.17 470.78 L1004.17 498.78 A73.5 73.5 0 0 0 952.20 477.25 Z" fill="#2872fa" stroke="#fff" stroke-width="1.1" stroke-linejoin="round"/>
<text x="987.87" y="464.94" font-size="5.9" text-anchor="middle" font-weight="bold" fill="#fff" stroke="#000" stroke-opacity="0.22" stroke-width="0.5" paint-order="stroke">12.5%</text>
<path d="M1032.17 470.78 A113.1 113.1 0 0 1 1056.69 594.03 L1020.11 578.88 A73.5 73.5 0 0 0 1004.17 498.78 Z" fill="#ffa426" stroke="#fff" stroke-width="1.1" stroke-linejoin="round"/>
<text x="1043.61" y="532.87" font-size="5.9" text-anchor="middle" font-weight="bold" fill="#fff" stroke="#000" stroke-opacity="0.22" stroke-width="0.5" paint-order="stroke">18.8%</text>
<path d="M1056.69 594.03 A113.1 113.1 0 1 1 952.20 437.65 L952.20 477.25 A73.5 73.5 0 1 0 1020.11 578.88 Z" fill="#00ce9b" stroke="#fff" stroke-width="1.1" stroke-linejoin="round"/>
<text x="874.71" y="602.83" font-size="5.9" text-anchor="middle" font-weight="bold" fill="#fff" stroke="#000" stroke-opacity="0.22" stroke-width="0.5" paint-order="stroke">68.8%</text>
<text x="952.20" y="546.00" font-size="8.2" text-anchor="middle" font-weight="normal" fill="#4a4f57">Total</text>
<text x="952.20" y="564.40" font-size="10.2" text-anchor="middle" font-weight="normal" fill="#373d3f">16</text>
<rect x="670.00" y="420.6" width="5" height="5" rx="1.3" fill="#2872fa"/>
<text x="675.70" y="425.60" font-size="6.45" text-anchor="start" font-weight="normal" fill="#4a4f57" textLength="28.10" lengthAdjust="spacingAndGlyphs">Facebook</text>
<rect x="709.20" y="420.6" width="5" height="5" rx="1.3" fill="#ffa426"/>
<text x="715.60" y="425.60" font-size="6.45" text-anchor="start" font-weight="normal" fill="#4a4f57" textLength="28.20" lengthAdjust="spacingAndGlyphs">Instagram</text>
<rect x="749.00" y="420.6" width="5" height="5" rx="1.3" fill="#00ce9b"/>
<text x="755.50" y="425.60" font-size="6.45" text-anchor="start" font-weight="normal" fill="#4a4f57" textLength="23.20" lengthAdjust="spacingAndGlyphs">Youtube</text>
<text x="1267.50" y="395.70" font-size="7.9" text-anchor="start" font-weight="normal" fill="#1b2250" textLength="71.50" lengthAdjust="spacingAndGlyphs" stroke="#1b2250" stroke-width="0.22">Top Devices - Clicks</text>
<path d="M1555.20 437.65 A113.1 113.1 0 1 1 1452.86 598.91 L1488.70 582.04 A73.5 73.5 0 1 0 1555.20 477.25 Z" fill="#2872fa" stroke="#fff" stroke-width="1.1" stroke-linejoin="round"/>
<text x="1633.89" y="600.99" font-size="5.9" text-anchor="middle" font-weight="bold" fill="#fff" stroke="#000" stroke-opacity="0.22" stroke-width="0.5" paint-order="stroke">68.0%</text>
<path d="M1452.86 598.91 A113.1 113.1 0 0 1 1520.13 443.23 L1532.41 480.87 A73.5 73.5 0 0 0 1488.70 582.04 Z" fill="#ffa426" stroke="#fff" stroke-width="1.1" stroke-linejoin="round"/>
<text x="1469.64" y="514.08" font-size="5.9" text-anchor="middle" font-weight="bold" fill="#fff" stroke="#000" stroke-opacity="0.22" stroke-width="0.5" paint-order="stroke">27.0%</text>
<path d="M1520.13 443.23 A113.1 113.1 0 0 1 1540.26 438.64 L1545.49 477.89 A73.5 73.5 0 0 0 1532.41 480.87 Z" fill="#00ce9b" stroke="#fff" stroke-width="1.1" stroke-linejoin="round"/>
<text x="1534.51" y="460.18" font-size="5.9" text-anchor="middle" font-weight="bold" fill="#fff" stroke="#000" stroke-opacity="0.22" stroke-width="0.5" paint-order="stroke">2.9%</text>
<path d="M1540.26 438.64 A113.1 113.1 0 0 1 1555.20 437.65 L1555.20 477.25 A73.5 73.5 0 0 0 1545.49 477.89 Z" fill="#f95565" stroke="#fff" stroke-width="1.1" stroke-linejoin="round"/>
<text x="1555.20" y="546.00" font-size="8.2" text-anchor="middle" font-weight="normal" fill="#4a4f57">Total</text>
<text x="1555.20" y="564.40" font-size="10.2" text-anchor="middle" font-weight="normal" fill="#373d3f">2750</text>
<rect x="1273.00" y="420.6" width="5" height="5" rx="1.3" fill="#2872fa"/>
<text x="1278.80" y="425.60" font-size="6.45" text-anchor="start" font-weight="normal" fill="#4a4f57" textLength="28.00" lengthAdjust="spacingAndGlyphs">Computer</text>
<rect x="1312.10" y="420.6" width="5" height="5" rx="1.3" fill="#ffa426"/>
<text x="1318.30" y="425.60" font-size="6.45" text-anchor="start" font-weight="normal" fill="#4a4f57" textLength="35.00" lengthAdjust="spacingAndGlyphs">Smartphone</text>
<rect x="1358.30" y="420.6" width="5" height="5" rx="1.3" fill="#00ce9b"/>
<text x="1364.90" y="425.60" font-size="6.45" text-anchor="start" font-weight="normal" fill="#4a4f57" textLength="16.80" lengthAdjust="spacingAndGlyphs">Tablet</text>
<rect x="1387.10" y="420.6" width="5" height="5" rx="1.3" fill="#f95565"/>
<text x="1393.10" y="425.60" font-size="6.45" text-anchor="start" font-weight="normal" fill="#4a4f57" textLength="21.80" lengthAdjust="spacingAndGlyphs">Phablet</text>
<text x="60.40" y="722.70" font-size="7.9" text-anchor="start" font-weight="normal" fill="#1b2250" textLength="53.80" lengthAdjust="spacingAndGlyphs" stroke="#1b2250" stroke-width="0.22">Top OS - Clicks</text>
<path d="M625.0 745.6h7.9M625.0 748h7.9M625.0 750.3h7.9" stroke="#99a0ab" stroke-width="1.2"/>
<line x1="84.4" y1="874.80" x2="616.9" y2="874.80" stroke="#ebebee" stroke-width="0.8"/>
<text x="79.80" y="876.80" font-size="5.7" text-anchor="end" font-weight="normal" fill="#373d3f">0</text>
<line x1="84.4" y1="855.18" x2="616.9" y2="855.18" stroke="#ebebee" stroke-width="0.8"/>
<text x="79.80" y="857.18" font-size="5.7" text-anchor="end" font-weight="normal" fill="#373d3f">200</text>
<line x1="84.4" y1="835.57" x2="616.9" y2="835.57" stroke="#ebebee" stroke-width="0.8"/>
<text x="79.80" y="837.57" font-size="5.7" text-anchor="end" font-weight="normal" fill="#373d3f">400</text>
<line x1="84.4" y1="815.95" x2="616.9" y2="815.95" stroke="#ebebee" stroke-width="0.8"/>
<text x="79.80" y="817.95" font-size="5.7" text-anchor="end" font-weight="normal" fill="#373d3f">600</text>
<line x1="84.4" y1="796.33" x2="616.9" y2="796.33" stroke="#ebebee" stroke-width="0.8"/>
<text x="79.80" y="798.33" font-size="5.7" text-anchor="end" font-weight="normal" fill="#373d3f">800</text>
<line x1="84.4" y1="776.72" x2="616.9" y2="776.72" stroke="#ebebee" stroke-width="0.8"/>
<text x="79.80" y="778.72" font-size="5.7" text-anchor="end" font-weight="normal" fill="#373d3f">1000</text>
<line x1="84.4" y1="757.10" x2="616.9" y2="757.10" stroke="#ebebee" stroke-width="0.8"/>
<text x="79.80" y="759.10" font-size="5.7" text-anchor="end" font-weight="normal" fill="#373d3f">1200</text>
<line x1="84.4" y1="875.20" x2="616.9" y2="875.20" stroke="#e0e0e0" stroke-width="0.7"/>
<line x1="84.40" y1="874.8" x2="84.40" y2="877.8" stroke="#e0e0e0" stroke-width="0.6"/>
<line x1="190.90" y1="874.8" x2="190.90" y2="877.8" stroke="#e0e0e0" stroke-width="0.6"/>
<line x1="297.40" y1="874.8" x2="297.40" y2="877.8" stroke="#e0e0e0" stroke-width="0.6"/>
<line x1="403.90" y1="874.8" x2="403.90" y2="877.8" stroke="#e0e0e0" stroke-width="0.6"/>
<line x1="510.40" y1="874.8" x2="510.40" y2="877.8" stroke="#e0e0e0" stroke-width="0.6"/>
<line x1="616.90" y1="874.8" x2="616.90" y2="877.8" stroke="#e0e0e0" stroke-width="0.6"/>
<rect x="100.38" y="771.52" width="74.55" height="103.28" fill="#4585f9"/>
<text x="137.65" y="826.36" font-size="6.0" text-anchor="middle" font-weight="bold" fill="#fff">1053</text>
<text x="137.65" y="886.90" font-size="5.7" text-anchor="middle" font-weight="normal" fill="#373d3f">Windows</text>
<rect x="206.88" y="834.29" width="74.55" height="40.51" fill="#27d5a7"/>
<text x="244.15" y="857.75" font-size="6.0" text-anchor="middle" font-weight="bold" fill="#fff">413</text>
<text x="244.15" y="886.90" font-size="5.7" text-anchor="middle" font-weight="normal" fill="#373d3f">Mac</text>
<rect x="313.38" y="837.53" width="74.55" height="37.27" fill="#ffb85a"/>
<text x="350.65" y="859.36" font-size="6.0" text-anchor="middle" font-weight="bold" fill="#fff">380</text>
<text x="350.65" y="886.90" font-size="5.7" text-anchor="middle" font-weight="normal" fill="#373d3f">Android</text>
<rect x="419.88" y="861.85" width="74.55" height="12.95" fill="#7b60f8"/>
<text x="457.15" y="871.53" font-size="6.0" text-anchor="middle" font-weight="bold" fill="#fff">132</text>
<text x="457.15" y="886.90" font-size="5.7" text-anchor="middle" font-weight="normal" fill="#373d3f">GNU/Linux</text>
<rect x="526.38" y="862.15" width="74.55" height="12.65" fill="#fa6b7a"/>
<text x="563.65" y="871.67" font-size="6.0" text-anchor="middle" font-weight="bold" fill="#fff">129</text>
<text x="563.65" y="886.90" font-size="5.7" text-anchor="middle" font-weight="normal" fill="#373d3f">iOS</text>
<text x="663.40" y="722.70" font-size="7.9" text-anchor="start" font-weight="normal" fill="#1b2250" textLength="72.90" lengthAdjust="spacingAndGlyphs" stroke="#1b2250" stroke-width="0.22">Top Browser - Clicks</text>
<path d="M1227.6 745.6h7.9M1227.6 748h7.9M1227.6 750.3h7.9" stroke="#99a0ab" stroke-width="1.2"/>
<line x1="687.4" y1="872.70" x2="1212.7" y2="872.70" stroke="#ebebee" stroke-width="0.8"/>
<text x="682.80" y="874.70" font-size="5.7" text-anchor="end" font-weight="normal" fill="#373d3f">0</text>
<line x1="687.4" y1="849.58" x2="1212.7" y2="849.58" stroke="#ebebee" stroke-width="0.8"/>
<text x="682.80" y="851.58" font-size="5.7" text-anchor="end" font-weight="normal" fill="#373d3f">200</text>
<line x1="687.4" y1="826.46" x2="1212.7" y2="826.46" stroke="#ebebee" stroke-width="0.8"/>
<text x="682.80" y="828.46" font-size="5.7" text-anchor="end" font-weight="normal" fill="#373d3f">400</text>
<line x1="687.4" y1="803.34" x2="1212.7" y2="803.34" stroke="#ebebee" stroke-width="0.8"/>
<text x="682.80" y="805.34" font-size="5.7" text-anchor="end" font-weight="normal" fill="#373d3f">600</text>
<line x1="687.4" y1="780.22" x2="1212.7" y2="780.22" stroke="#ebebee" stroke-width="0.8"/>
<text x="682.80" y="782.22" font-size="5.7" text-anchor="end" font-weight="normal" fill="#373d3f">800</text>
<line x1="687.4" y1="757.10" x2="1212.7" y2="757.10" stroke="#ebebee" stroke-width="0.8"/>
<text x="682.80" y="759.10" font-size="5.7" text-anchor="end" font-weight="normal" fill="#373d3f">1000</text>
<line x1="687.4" y1="873.10" x2="1212.7" y2="873.10" stroke="#e0e0e0" stroke-width="0.7"/>
<line x1="687.40" y1="872.7" x2="687.40" y2="875.7" stroke="#e0e0e0" stroke-width="0.6"/>
<line x1="862.50" y1="872.7" x2="862.50" y2="875.7" stroke="#e0e0e0" stroke-width="0.6"/>
<line x1="1037.60" y1="872.7" x2="1037.60" y2="875.7" stroke="#e0e0e0" stroke-width="0.6"/>
<line x1="1212.70" y1="872.7" x2="1212.70" y2="875.7" stroke="#e0e0e0" stroke-width="0.6"/>
<rect x="707.10" y="759.53" width="91.93" height="113.17" fill="#4585f9"/>
<text x="753.06" y="819.31" font-size="6.0" text-anchor="middle" font-weight="bold" fill="#fff">979</text>
<text x="753.06" y="884.80" font-size="5.7" text-anchor="middle" font-weight="normal" fill="#373d3f">Chrome</text>
<rect x="838.42" y="862.53" width="91.93" height="10.17" fill="#27d5a7"/>
<text x="884.39" y="872.50" font-size="6.0" text-anchor="middle" font-weight="bold" fill="#fff">88</text>
<text x="884.39" y="884.80" font-size="5.7" text-anchor="middle" font-weight="normal" fill="#373d3f">Internet Explorer</text>
<rect x="969.75" y="857.90" width="91.93" height="14.80" fill="#ffb85a"/>
<text x="1015.71" y="868.50" font-size="6.0" text-anchor="middle" font-weight="bold" fill="#fff">128</text>
<text x="1015.71" y="884.80" font-size="5.7" text-anchor="middle" font-weight="normal" fill="#373d3f">Safari</text>
<text x="1265.40" y="722.70" font-size="7.9" text-anchor="start" font-weight="normal" fill="#1b2250" textLength="73.60" lengthAdjust="spacingAndGlyphs" stroke="#1b2250" stroke-width="0.22">Top Medium - Clicks</text>
<path d="M1830.2 745.6h7.9M1830.2 748h7.9M1830.2 750.3h7.9" stroke="#99a0ab" stroke-width="1.2"/>
<line x1="1284.2" y1="874.80" x2="1827.6" y2="874.80" stroke="#ebebee" stroke-width="0.8"/>
<text x="1279.60" y="876.80" font-size="5.7" text-anchor="end" font-weight="normal" fill="#373d3f">0</text>
<line x1="1284.2" y1="851.26" x2="1827.6" y2="851.26" stroke="#ebebee" stroke-width="0.8"/>
<text x="1279.60" y="853.26" font-size="5.7" text-anchor="end" font-weight="normal" fill="#373d3f">5</text>
<line x1="1284.2" y1="827.72" x2="1827.6" y2="827.72" stroke="#ebebee" stroke-width="0.8"/>
<text x="1279.60" y="829.72" font-size="5.7" text-anchor="end" font-weight="normal" fill="#373d3f">10</text>
<line x1="1284.2" y1="804.18" x2="1827.6" y2="804.18" stroke="#ebebee" stroke-width="0.8"/>
<text x="1279.60" y="806.18" font-size="5.7" text-anchor="end" font-weight="normal" fill="#373d3f">15</text>
<line x1="1284.2" y1="780.64" x2="1827.6" y2="780.64" stroke="#ebebee" stroke-width="0.8"/>
<text x="1279.60" y="782.64" font-size="5.7" text-anchor="end" font-weight="normal" fill="#373d3f">20</text>
<line x1="1284.2" y1="757.10" x2="1827.6" y2="757.10" stroke="#ebebee" stroke-width="0.8"/>
<text x="1279.60" y="759.10" font-size="5.7" text-anchor="end" font-weight="normal" fill="#373d3f">25</text>
<line x1="1284.2" y1="875.20" x2="1827.6" y2="875.20" stroke="#e0e0e0" stroke-width="0.7"/>
<line x1="1284.20" y1="874.8" x2="1284.20" y2="877.8" stroke="#e0e0e0" stroke-width="0.6"/>
<line x1="1555.90" y1="874.8" x2="1555.90" y2="877.8" stroke="#e0e0e0" stroke-width="0.6"/>
<line x1="1827.60" y1="874.8" x2="1827.60" y2="877.8" stroke="#e0e0e0" stroke-width="0.6"/>
<rect x="1324.95" y="799.47" width="190.19" height="75.33" fill="#4585f9"/>
<text x="1420.05" y="840.34" font-size="6.0" text-anchor="middle" font-weight="bold" fill="#fff">16</text>
<text x="1420.05" y="886.90" font-size="5.7" text-anchor="middle" font-weight="normal" fill="#373d3f">Social</text>
<rect x="1596.65" y="757.10" width="190.19" height="117.70" fill="#27d5a7"/>
<text x="1691.75" y="819.15" font-size="6.0" text-anchor="middle" font-weight="bold" fill="#fff">25</text>
<text x="1691.75" y="886.90" font-size="5.7" text-anchor="middle" font-weight="normal" fill="#373d3f">Search</text>
</g></svg>
</div></div>
</body></html>
